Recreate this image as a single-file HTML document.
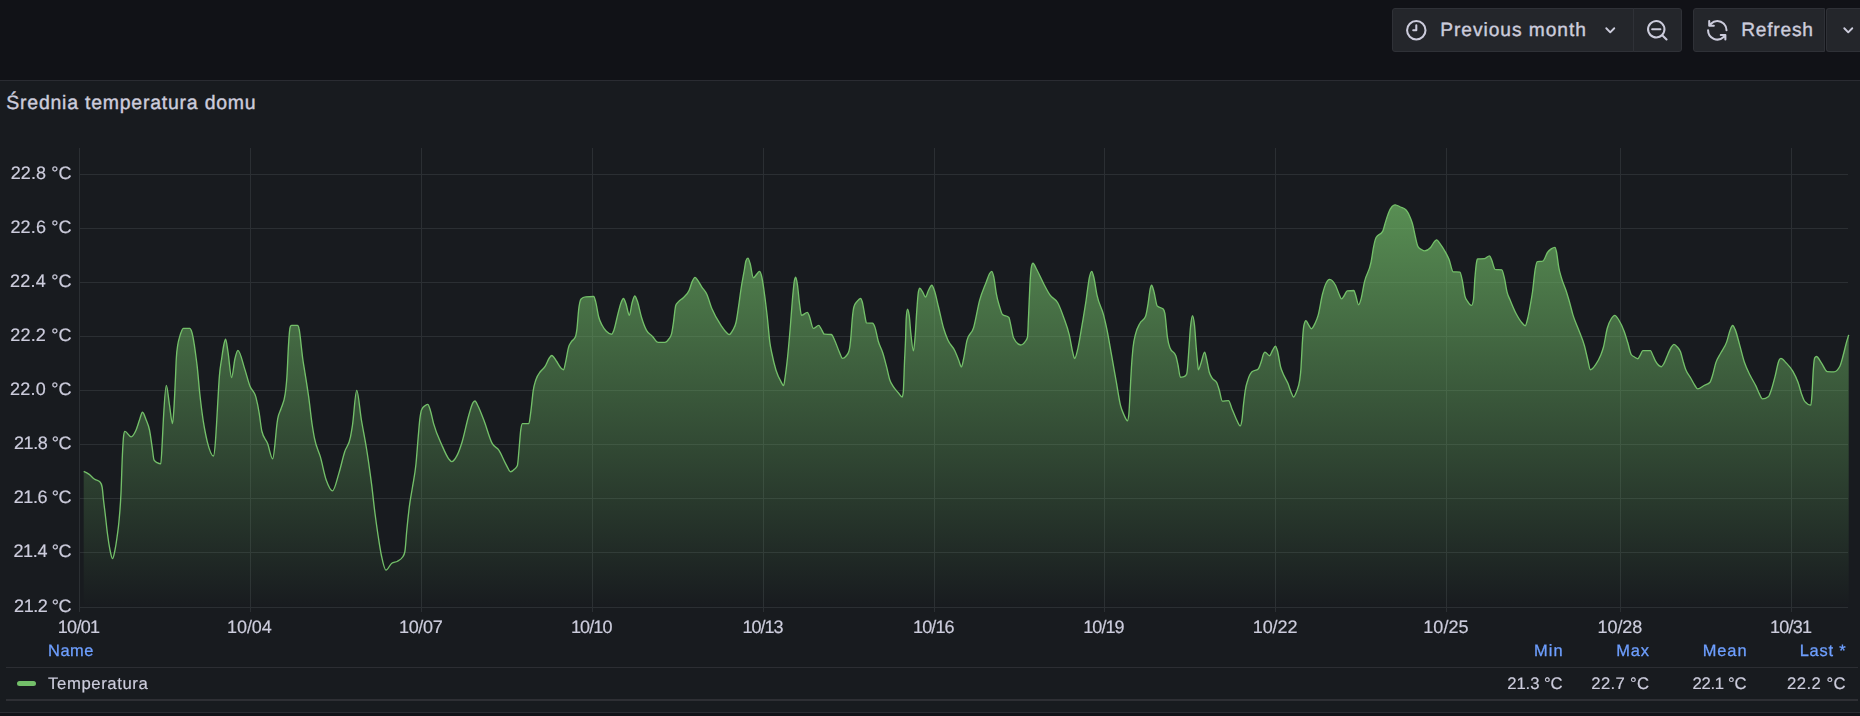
<!DOCTYPE html>
<html lang="en"><head><meta charset="utf-8"><title>Średnia temperatura domu</title>
<style>
html,body{margin:0;padding:0;overflow:hidden;}
body{width:1860px;height:716px;overflow:hidden;background:#111217;position:relative;font-family:"Liberation Sans",sans-serif;}
.t{position:absolute;white-space:nowrap;line-height:1;text-rendering:geometricPrecision;}
.ic{position:absolute;}
.plot{position:absolute;left:0;top:0;}
.btn{position:absolute;box-sizing:border-box;background:#24262b;border:1px solid #2f3137;height:44px;top:8px;}
.panel{position:absolute;left:0;top:80px;width:1860px;height:633px;box-sizing:border-box;background:#181b1f;border:1px solid #2a2c32;border-left:none;border-right:none;}
.hr{position:absolute;left:6px;width:1852px;}
.gl{position:absolute;left:0;top:0;width:1860px;height:716px;will-change:transform;}
</style></head><body>
<div class="btn" style="left:1392px;width:242px;border-radius:3px 0 0 3px;"></div>
<div class="btn" style="left:1633px;width:49px;border-radius:0 3px 3px 0;"></div>
<div class="btn" style="left:1693px;width:132px;border-radius:3px 0 0 3px;"></div>
<div class="btn" style="left:1825.5px;width:34.5px;border-radius:3px 0 0 3px;border-right:none;"></div>
<div class="panel"></div>
<svg class="plot" width="1860" height="716" viewBox="0 0 1860 716">
<defs><linearGradient id="g" gradientUnits="userSpaceOnUse" x1="0" y1="148" x2="0" y2="607">
<stop offset="0" stop-color="#73bf69" stop-opacity="0.8"/><stop offset="1" stop-color="#73bf69" stop-opacity="0"/></linearGradient></defs>
<g fill="rgb(43,47,51)" shape-rendering="crispEdges"><rect x="79" y="148" width="1" height="464"/><rect x="250" y="148" width="1" height="464"/><rect x="421" y="148" width="1" height="464"/><rect x="592" y="148" width="1" height="464"/><rect x="763" y="148" width="1" height="464"/><rect x="934" y="148" width="1" height="464"/><rect x="1104" y="148" width="1" height="464"/><rect x="1275" y="148" width="1" height="464"/><rect x="1446" y="148" width="1" height="464"/><rect x="1620" y="148" width="1" height="464"/><rect x="1791" y="148" width="1" height="464"/><rect x="79" y="174" width="1769" height="1"/><rect x="79" y="228" width="1769" height="1"/><rect x="79" y="282" width="1769" height="1"/><rect x="79" y="336" width="1769" height="1"/><rect x="79" y="390" width="1769" height="1"/><rect x="79" y="444" width="1769" height="1"/><rect x="79" y="498" width="1769" height="1"/><rect x="79" y="552" width="1769" height="1"/><rect x="79" y="607" width="1769" height="1"/></g>
<path d="M83.7,471.4C85.5,472.2 87.4,473.1 89.2,474.4C90.9,475.6 92.6,477.8 94.3,479.0C96.2,480.4 98.2,480.0 100.1,482.0C100.8,482.7 101.4,483.7 102.1,487.0C102.6,489.3 103.0,495.9 103.5,500.0C104.1,505.0 104.6,509.2 105.2,514.0C106.0,520.5 106.7,528.2 107.5,534.0C108.3,540.3 109.2,545.9 110.0,550.0C110.8,554.1 111.7,558.6 112.5,558.6C113.3,558.6 114.0,554.6 114.8,551.0C115.5,547.5 116.3,542.8 117.0,537.5C117.6,532.9 118.3,528.9 118.9,522.0C119.6,514.4 120.3,508.3 121.0,493.0C121.5,482.8 121.9,464.8 122.4,455.0C122.8,446.6 123.2,438.8 123.6,436.0C124.0,432.9 124.5,431.4 124.9,431.4C127.0,431.4 129.0,436.8 131.1,436.8C132.8,436.8 134.4,433.8 136.1,430.0C137.2,427.4 138.4,423.1 139.5,420.0C140.5,417.2 141.5,412.2 142.5,412.2C143.7,412.2 145.0,416.8 146.2,420.0C147.3,422.9 148.4,424.6 149.5,430.0C150.4,434.3 151.2,441.1 152.1,446.8C152.8,451.2 153.4,459.1 154.1,460.2C155.1,461.9 156.1,462.1 157.1,462.7C158.3,463.4 159.6,463.9 160.8,463.9C161.2,463.9 161.7,452.6 162.1,445.1C162.5,437.6 163.0,426.6 163.4,419.0C164.4,402.1 165.3,385.4 166.3,385.4C167.4,385.4 168.4,398.4 169.5,405.0C170.5,411.2 171.5,423.6 172.5,423.6C172.9,423.6 173.4,416.7 173.8,410.5C174.4,402.4 174.9,389.5 175.5,377.0C175.8,371.1 176.0,363.4 176.3,358.5C176.8,349.4 177.3,348.2 177.8,344.7C178.4,340.3 179.1,338.9 179.7,336.6C180.2,334.8 180.7,333.2 181.2,332.0C181.9,330.2 182.7,328.4 183.4,328.4C185.5,328.4 187.7,328.4 189.8,328.4C190.3,328.4 190.8,329.2 191.3,330.5C191.8,331.9 192.4,334.0 192.9,336.6C193.4,338.9 193.8,341.7 194.3,344.7C194.7,347.5 195.2,350.8 195.6,354.0C196.1,358.0 196.7,361.9 197.2,366.6C198.1,374.3 198.9,385.7 199.8,393.8C200.9,404.1 202.0,412.8 203.1,420.0C203.7,423.7 204.2,426.9 204.8,430.0C205.6,434.5 206.5,438.4 207.3,441.8C209.4,450.1 211.4,456.0 213.5,456.0C214.1,456.0 214.8,449.7 215.4,441.8C215.8,437.2 216.1,430.9 216.5,425.0C217.2,413.7 217.9,399.0 218.6,388.0C218.9,383.8 219.1,379.5 219.4,376.0C220.2,366.0 220.9,363.9 221.7,358.5C222.4,353.6 223.1,348.3 223.8,345.0C224.4,342.2 225.0,339.2 225.6,339.2C226.4,339.2 227.2,347.2 228.0,352.0C229.2,359.2 230.4,377.5 231.6,377.5C232.7,377.5 233.9,363.1 235.0,358.5C236.0,354.5 236.9,350.3 237.9,350.3C240.1,350.3 242.4,361.8 244.6,368.6C246.4,374.0 248.2,381.5 250.0,386.2C252.0,391.3 253.9,389.8 255.9,397.1C257.0,401.3 258.2,407.1 259.3,413.9C260.1,418.9 261.0,427.4 261.8,431.0C263.7,439.3 265.7,438.4 267.6,443.5C269.3,447.9 271.0,458.9 272.7,458.9C273.5,458.9 274.4,449.6 275.2,441.8C275.6,437.8 276.1,431.9 276.5,428.0C276.9,424.4 277.3,421.3 277.7,418.9C278.8,412.2 279.9,412.4 281.0,408.8C282.4,404.2 283.8,403.8 285.2,393.8C285.8,389.8 286.3,385.4 286.9,377.0C287.5,368.6 288.0,351.9 288.6,343.5C289.1,335.6 289.7,328.3 290.2,327.0C290.6,325.9 291.1,325.4 291.5,325.4C293.5,325.4 295.5,325.4 297.5,325.4C298.0,325.4 298.6,326.6 299.1,329.0C299.5,330.6 299.8,333.7 300.2,336.6C300.6,339.5 300.9,343.3 301.3,346.5C301.8,350.6 302.2,354.9 302.7,358.5C303.3,363.3 304.0,366.5 304.6,370.5C306.0,379.2 307.3,387.1 308.7,397.1C309.9,405.6 311.0,417.2 312.2,425.0C313.0,430.1 313.7,434.5 314.5,438.4C316.5,448.4 318.4,449.9 320.4,456.9C322.4,463.9 324.3,474.7 326.3,480.3C328.4,486.2 330.4,490.9 332.5,490.9C334.6,490.9 336.7,480.4 338.8,473.6C340.8,467.2 342.7,458.0 344.7,451.8C346.6,445.7 348.6,446.6 350.5,436.8C351.2,433.4 351.8,429.4 352.5,425.0C353.9,415.7 355.3,390.4 356.7,390.4C358.3,390.4 359.8,410.7 361.4,420.0C363.1,430.1 364.8,437.8 366.5,448.5C368.2,459.0 369.8,470.5 371.5,483.7C372.7,492.9 373.8,504.4 375.0,513.5C376.0,521.3 377.0,528.4 378.0,535.0C379.2,542.7 380.3,550.4 381.5,556.0C383.0,563.0 384.4,570.1 385.9,570.1C387.9,570.1 389.8,564.6 391.8,563.2C393.7,561.9 395.7,562.4 397.6,561.2C399.3,560.2 400.9,559.8 402.6,557.0C403.3,555.8 404.1,555.3 404.8,552.0C405.5,549.0 406.1,537.1 406.8,530.3C407.6,521.8 408.5,513.5 409.3,506.8C410.4,498.3 411.4,493.8 412.5,487.0C413.7,479.5 414.8,475.5 416.0,463.8C416.7,456.4 417.5,445.4 418.2,437.0C418.8,430.5 419.3,423.1 419.9,418.6C420.5,414.0 421.0,411.0 421.6,409.7C422.8,406.9 424.1,406.4 425.3,405.5C426.1,404.9 427.0,404.3 427.8,404.3C428.6,404.3 429.5,407.6 430.3,410.2C431.4,413.6 432.5,419.6 433.6,423.6C436.4,433.8 439.2,439.1 442.0,445.4C444.2,450.5 446.5,456.0 448.7,458.8C449.7,460.1 450.7,461.6 451.7,461.6C453.5,461.6 455.3,458.9 457.1,455.4C458.8,452.2 460.4,447.4 462.1,442.0C464.3,434.8 466.6,422.7 468.8,415.2C470.2,410.5 471.6,404.9 473.0,402.7C473.7,401.7 474.3,401.0 475.0,401.0C476.0,401.0 477.0,404.1 478.0,406.0C480.0,409.8 481.9,415.2 483.9,420.3C486.7,427.5 489.5,438.7 492.3,443.7C494.5,447.7 496.8,447.0 499.0,450.4C501.2,453.8 503.5,459.9 505.7,463.8C507.4,466.7 509.0,471.7 510.7,471.7C512.1,471.7 513.5,470.3 514.9,468.8C515.7,467.9 516.6,467.7 517.4,465.5C518.0,464.0 518.5,454.8 519.1,448.7C519.6,443.0 520.2,434.5 520.7,430.3C521.3,425.9 521.8,423.6 522.4,423.6C524.5,423.6 526.7,423.6 528.8,423.6C529.5,423.6 530.1,416.7 530.8,411.9C531.6,406.0 532.5,395.4 533.3,390.1C534.1,384.8 535.0,382.7 535.8,380.0C537.4,374.9 538.9,373.8 540.5,371.5C542.0,369.3 543.6,368.8 545.1,366.4C546.5,364.2 547.9,359.9 549.3,358.0C550.1,356.9 551.0,355.5 551.8,355.5C553.2,355.5 554.6,358.6 556.0,360.5C557.7,362.7 559.3,366.4 561.0,368.0C561.9,368.8 562.7,369.7 563.6,369.7C564.3,369.7 564.9,365.0 565.6,362.2C566.6,357.9 567.6,350.5 568.6,347.1C569.4,344.3 570.3,343.5 571.1,342.1C572.5,339.7 573.9,340.4 575.3,337.1C575.9,335.8 576.4,333.4 577.0,328.7C577.5,324.3 578.1,315.0 578.6,310.3C579.4,303.0 580.3,299.7 581.1,298.9C582.5,297.6 583.9,297.0 585.3,296.9C588.1,296.6 590.9,296.5 593.7,296.5C594.4,296.5 595.0,299.5 595.7,301.9C596.7,305.5 597.7,313.2 598.7,317.0C599.8,321.3 601.0,323.1 602.1,325.3C603.5,328.1 604.9,329.8 606.3,331.2C608.1,333.1 610.0,334.2 611.8,334.2C612.5,334.2 613.1,332.1 613.8,330.4C615.2,326.8 616.6,318.8 618.0,313.6C619.1,309.5 620.2,304.5 621.3,301.9C622.0,300.2 622.8,298.5 623.5,298.5C624.3,298.5 625.1,301.5 625.9,303.6C627.1,306.7 628.2,315.3 629.4,315.3C630.2,315.3 631.1,306.7 631.9,303.6C632.8,300.1 633.8,296.0 634.7,296.0C635.6,296.0 636.4,298.7 637.3,301.0C638.7,304.7 640.0,312.4 641.4,317.0C643.1,322.7 644.8,327.2 646.5,330.4C648.4,334.0 650.4,334.2 652.3,336.2C654.3,338.2 656.2,342.4 658.2,342.4C660.4,342.4 662.7,342.4 664.9,342.4C666.3,342.4 667.7,340.9 669.1,338.7C669.9,337.4 670.8,337.0 671.6,333.7C672.2,331.4 672.7,327.4 673.3,323.7C674.1,318.3 675.0,307.4 675.8,305.2C676.6,303.0 677.5,302.9 678.3,301.9C680.0,300.0 681.6,299.4 683.3,297.7C685.3,295.7 687.2,294.7 689.2,290.2C690.3,287.7 691.4,283.1 692.5,280.9C693.3,279.2 694.2,277.3 695.0,277.3C695.9,277.3 696.7,279.0 697.6,280.1C699.0,281.9 700.3,284.7 701.7,286.8C703.4,289.5 705.1,290.6 706.8,294.3C708.5,297.9 710.1,304.4 711.8,308.6C714.9,316.2 717.9,320.7 721.0,325.3C723.0,328.2 724.9,331.3 726.9,332.9C727.7,333.6 728.6,334.5 729.4,334.5C730.5,334.5 731.6,332.4 732.7,330.4C733.8,328.3 735.0,327.3 736.1,322.0C736.9,318.3 737.7,312.3 738.5,307.0C739.4,301.2 740.2,294.1 741.1,288.5C742.2,281.1 743.4,275.5 744.5,269.0C745.0,266.3 745.4,262.4 745.9,261.0C746.6,259.1 747.2,258.1 747.9,258.1C748.6,258.1 749.4,261.1 750.1,263.5C751.2,267.0 752.2,277.7 753.3,277.7C755.4,277.7 757.6,271.3 759.7,271.3C760.4,271.3 761.2,274.2 761.9,277.5C762.7,281.2 763.6,287.5 764.4,293.5C765.4,300.4 766.3,308.2 767.3,317.0C768.1,324.6 769.0,335.7 769.8,342.0C770.5,347.6 771.3,350.4 772.0,354.0C773.3,360.6 774.7,365.8 776.0,370.2C777.7,375.8 779.4,378.9 781.1,381.9C781.9,383.4 782.8,385.6 783.6,385.6C784.2,385.6 784.7,379.8 785.3,376.0C786.1,370.8 786.8,364.3 787.6,357.0C788.5,348.4 789.4,337.7 790.3,327.0C791.1,317.1 792.0,304.0 792.8,295.3C793.4,289.4 793.9,283.0 794.5,280.2C794.9,278.2 795.3,277.2 795.7,277.2C796.2,277.2 796.8,280.8 797.3,284.0C798.1,288.7 798.8,298.5 799.6,304.0C800.2,308.6 800.9,315.4 801.5,315.4C803.5,315.4 805.4,312.4 807.4,312.4C808.0,312.4 808.7,314.6 809.3,316.0C810.6,319.0 812.0,328.4 813.3,328.4C815.1,328.4 816.9,325.4 818.7,325.4C819.5,325.4 820.2,327.4 821.0,328.5C822.1,330.2 823.3,334.1 824.4,334.2C826.7,334.4 829.0,334.3 831.3,334.5C832.4,334.6 833.4,337.8 834.5,340.0C836.1,343.2 837.7,348.5 839.3,352.0C840.4,354.3 841.4,358.3 842.5,358.3C843.7,358.3 844.8,357.6 846.0,356.2C847.0,355.0 848.0,354.5 849.0,351.0C849.5,349.2 850.1,345.4 850.6,340.3C851.2,334.9 851.7,324.3 852.3,318.7C852.8,313.4 853.4,308.9 853.9,307.0C855.0,303.1 856.2,302.6 857.3,301.1C858.4,299.7 859.5,298.3 860.6,298.3C861.2,298.3 861.7,300.0 862.3,302.0C863.1,304.9 864.0,311.4 864.8,315.4C865.4,318.1 865.9,322.8 866.5,322.9C868.5,323.1 870.4,323.0 872.4,323.2C873.2,323.3 874.1,324.8 874.9,327.1C876.0,330.1 877.1,337.1 878.2,341.0C879.7,346.4 881.3,348.1 882.8,353.0C884.1,357.0 885.3,362.0 886.6,366.9C887.7,371.2 888.8,377.1 889.9,380.3C890.8,382.8 891.6,383.8 892.5,385.3C894.4,388.6 896.4,390.5 898.3,392.8C899.6,394.3 900.9,397.0 902.2,397.0C902.6,397.0 902.9,395.3 903.3,392.0C903.7,388.4 904.1,371.3 904.5,362.0C904.9,353.4 905.2,348.5 905.6,338.0C905.8,332.3 906.0,321.6 906.2,318.7C906.6,312.4 907.1,309.2 907.5,309.2C908.1,309.2 908.6,311.3 909.2,315.4C909.8,319.5 910.3,328.6 910.9,333.8C911.7,341.5 912.6,350.8 913.4,350.8C914.0,350.8 914.5,343.7 915.1,337.0C915.7,330.3 916.2,318.1 916.8,310.4C917.3,303.2 917.9,294.7 918.4,291.9C918.9,289.4 919.3,288.2 919.8,288.2C920.7,288.2 921.7,290.5 922.6,291.9C923.6,293.4 924.5,297.0 925.5,297.0C926.5,297.0 927.5,292.2 928.5,290.3C929.6,288.2 930.7,285.2 931.8,285.2C932.6,285.2 933.5,288.0 934.3,290.3C935.7,294.2 937.1,301.3 938.5,307.0C940.2,313.8 941.8,322.3 943.5,328.0C945.0,333.1 946.5,336.9 948.0,340.3C950.3,345.4 952.5,345.9 954.8,350.7C956.1,353.4 957.3,356.9 958.6,360.0C959.6,362.3 960.5,366.9 961.5,366.9C962.2,366.9 962.9,362.1 963.6,359.0C964.7,354.0 965.9,344.6 967.0,340.3C969.2,332.1 971.3,335.1 973.5,328.0C975.5,321.4 977.6,307.8 979.6,300.3C981.8,292.1 984.1,287.7 986.3,281.9C987.4,279.0 988.5,275.3 989.6,273.5C990.3,272.3 991.1,271.3 991.8,271.3C992.5,271.3 993.1,273.9 993.8,276.9C994.6,280.7 995.5,289.0 996.3,293.6C997.4,299.9 998.6,303.3 999.7,307.0C1000.6,310.0 1001.6,313.7 1002.5,314.5C1004.6,316.4 1006.8,315.5 1008.9,317.4C1009.4,317.9 1010.0,321.5 1010.5,323.8C1011.5,328.0 1012.5,335.6 1013.5,337.7C1015.9,342.6 1018.2,345.0 1020.6,345.0C1022.3,345.0 1023.9,343.7 1025.6,341.0C1026.2,340.0 1026.9,339.7 1027.5,337.0C1027.9,335.5 1028.2,322.6 1028.6,315.0C1029.1,303.9 1029.7,288.4 1030.2,280.0C1030.6,273.7 1031.0,268.6 1031.4,266.8C1031.9,264.4 1032.5,263.2 1033.0,263.2C1034.1,263.2 1035.1,266.6 1036.2,268.5C1038.7,273.0 1041.3,279.2 1043.8,284.0C1045.9,288.0 1048.0,292.2 1050.1,295.2C1052.6,298.8 1055.2,298.2 1057.7,302.8C1059.6,306.3 1061.6,311.6 1063.5,317.0C1065.5,322.5 1067.4,326.8 1069.4,335.4C1070.5,340.2 1071.6,347.8 1072.7,352.2C1073.3,354.7 1074.0,358.5 1074.6,358.5C1075.7,358.5 1076.7,353.2 1077.8,348.8C1079.2,343.0 1080.6,333.6 1082.0,325.4C1083.4,317.4 1084.7,309.3 1086.1,300.3C1087.2,292.9 1088.4,281.6 1089.5,276.8C1090.2,273.7 1091.0,271.3 1091.7,271.3C1092.4,271.3 1093.0,274.3 1093.7,276.8C1094.8,281.0 1095.9,290.0 1097.0,295.2C1099.2,305.8 1101.5,306.5 1103.7,315.3C1104.8,319.8 1106.0,324.8 1107.1,330.4C1108.5,337.3 1109.9,345.8 1111.3,353.6C1113.0,362.9 1114.6,372.5 1116.3,381.9C1117.7,389.8 1119.1,399.7 1120.5,405.3C1121.6,409.7 1122.7,412.0 1123.8,414.5C1125.0,417.3 1126.3,420.7 1127.5,420.7C1128.0,420.7 1128.4,418.4 1128.9,413.7C1129.3,409.4 1129.8,398.2 1130.2,390.3C1130.6,383.0 1131.0,374.4 1131.4,368.0C1131.9,359.5 1132.5,353.1 1133.0,347.8C1133.9,339.2 1134.7,337.5 1135.6,333.8C1137.0,328.0 1138.3,326.4 1139.7,323.7C1141.7,319.8 1143.6,321.2 1145.6,316.2C1146.4,314.1 1147.3,308.6 1148.1,303.6C1148.8,299.2 1149.6,291.5 1150.3,288.5C1150.7,286.7 1151.2,285.2 1151.6,285.2C1152.4,285.2 1153.2,289.2 1154.0,291.9C1155.1,295.7 1156.2,305.0 1157.3,306.1C1159.3,308.0 1161.2,307.1 1163.2,309.0C1163.8,309.6 1164.3,310.6 1164.9,313.7C1165.7,318.2 1166.6,331.4 1167.4,337.1C1168.2,342.8 1169.1,345.6 1169.9,347.8C1171.9,353.1 1173.8,350.4 1175.8,355.7C1176.5,357.7 1177.3,361.6 1178.0,365.0C1178.8,368.7 1179.6,377.2 1180.4,377.2C1181.4,377.2 1182.3,377.1 1183.3,376.9C1184.4,376.7 1185.5,376.0 1186.6,374.3C1186.9,373.8 1187.3,370.4 1187.6,367.0C1188.0,362.9 1188.4,356.0 1188.8,350.5C1189.4,342.7 1189.9,332.8 1190.5,327.1C1191.2,320.4 1191.8,315.7 1192.5,315.7C1193.2,315.7 1193.8,319.3 1194.5,325.4C1195.1,330.6 1195.6,340.4 1196.2,347.2C1196.6,352.4 1197.1,357.8 1197.5,362.0C1197.8,364.9 1198.1,369.8 1198.4,369.8C1199.2,369.8 1200.1,365.8 1200.9,363.5C1202.1,360.1 1203.4,352.1 1204.6,352.1C1205.3,352.1 1206.0,356.6 1206.7,359.5C1207.5,363.0 1208.4,369.0 1209.2,372.0C1210.1,375.1 1210.9,376.2 1211.8,377.7C1213.5,380.7 1215.1,379.4 1216.8,382.7C1217.6,384.4 1218.5,387.6 1219.3,390.3C1220.3,393.6 1221.3,401.1 1222.3,401.1C1224.4,401.1 1226.4,400.6 1228.5,400.6C1229.6,400.6 1230.8,406.0 1231.9,408.7C1233.3,412.0 1234.7,415.8 1236.1,418.7C1237.5,421.5 1238.8,425.9 1240.2,425.9C1240.8,425.9 1241.3,424.1 1241.9,420.4C1242.5,416.7 1243.0,408.7 1243.6,403.7C1244.2,398.7 1244.7,393.9 1245.3,390.3C1246.1,385.0 1247.0,382.9 1247.8,380.2C1249.2,375.6 1250.6,373.1 1252.0,371.8C1254.1,369.9 1256.1,370.9 1258.2,369.0C1259.2,368.1 1260.2,364.8 1261.2,361.8C1262.0,359.5 1262.7,355.6 1263.5,354.0C1264.0,353.0 1264.4,352.1 1264.9,352.1C1266.5,352.1 1268.0,355.7 1269.6,355.7C1270.7,355.7 1271.8,351.4 1272.9,349.7C1273.7,348.4 1274.6,346.2 1275.4,346.2C1276.1,346.2 1276.8,348.6 1277.5,351.0C1278.5,354.6 1279.6,363.1 1280.6,367.0C1281.4,370.0 1282.2,371.5 1283.0,373.5C1284.7,377.6 1286.3,379.5 1288.0,383.6C1289.1,386.3 1290.2,390.3 1291.3,392.8C1292.0,394.5 1292.8,397.0 1293.5,397.0C1294.5,397.0 1295.4,394.4 1296.4,391.9C1297.5,389.0 1298.6,388.0 1299.7,380.2C1300.1,377.1 1300.6,374.1 1301.0,368.0C1301.4,361.9 1301.9,350.5 1302.3,343.8C1302.8,335.6 1303.4,327.9 1303.9,325.4C1304.6,322.3 1305.2,320.7 1305.9,320.7C1306.9,320.7 1307.9,324.0 1308.9,325.4C1309.7,326.6 1310.6,328.7 1311.4,328.7C1312.5,328.7 1313.7,326.1 1314.8,323.9C1315.9,321.6 1317.1,319.3 1318.2,315.2C1319.6,310.1 1321.0,300.0 1322.4,294.5C1323.7,289.5 1324.9,285.5 1326.2,283.0C1327.3,280.7 1328.5,279.3 1329.6,279.3C1331.6,279.3 1333.6,281.6 1335.6,285.5C1336.8,287.9 1338.1,292.1 1339.3,294.7C1340.0,296.3 1340.8,298.9 1341.5,298.9C1342.4,298.9 1343.4,296.8 1344.3,295.5C1345.3,294.1 1346.2,290.9 1347.2,290.8C1349.4,290.6 1351.7,290.5 1353.9,290.5C1354.4,290.5 1355.0,293.2 1355.5,294.7C1356.5,297.6 1357.6,304.7 1358.6,304.7C1359.4,304.7 1360.3,301.8 1361.1,298.9C1362.2,295.0 1363.3,286.9 1364.4,282.1C1366.6,272.3 1368.9,273.6 1371.1,262.0C1371.9,257.7 1372.8,251.0 1373.6,246.9C1374.4,242.8 1375.3,239.1 1376.1,237.5C1378.3,233.2 1380.6,235.4 1382.8,231.1C1383.7,229.4 1384.5,225.2 1385.4,222.4C1386.5,218.9 1387.6,215.0 1388.7,212.4C1389.8,209.7 1391.0,207.8 1392.1,206.5C1393.1,205.4 1394.1,204.8 1395.1,204.8C1396.9,204.8 1398.6,206.1 1400.4,207.0C1402.4,208.0 1404.3,208.1 1406.3,210.3C1407.7,211.9 1409.1,214.5 1410.5,218.2C1411.3,220.4 1412.2,222.6 1413.0,225.8C1413.8,229.0 1414.7,234.0 1415.5,237.5C1416.3,241.0 1417.2,245.3 1418.0,246.7C1419.1,248.6 1420.3,248.8 1421.4,249.5C1422.5,250.2 1423.6,250.9 1424.7,250.9C1426.7,250.9 1428.6,249.7 1430.6,247.5C1432.0,245.9 1433.4,242.5 1434.8,241.2C1435.5,240.6 1436.1,239.8 1436.8,239.8C1437.8,239.8 1438.8,242.0 1439.8,243.3C1441.8,245.9 1443.7,248.9 1445.7,252.6C1446.8,254.7 1447.9,256.6 1449.0,259.3C1450.4,262.7 1451.8,271.7 1453.2,271.8C1455.4,272.0 1457.7,271.9 1459.9,272.1C1460.7,272.2 1461.6,277.0 1462.4,281.0C1463.2,285.0 1464.1,292.8 1464.9,296.1C1465.7,299.4 1466.6,299.7 1467.4,301.1C1468.8,303.4 1470.2,305.3 1471.6,305.3C1472.2,305.3 1472.9,303.4 1473.5,299.5C1473.9,296.9 1474.4,285.1 1474.8,279.4C1475.4,272.0 1475.9,266.0 1476.5,262.6C1476.8,260.6 1477.2,258.9 1477.5,258.9C1479.7,258.8 1482.0,258.8 1484.2,258.7C1486.0,258.6 1487.7,255.9 1489.5,255.9C1490.2,255.9 1491.0,258.5 1491.7,260.1C1492.8,262.6 1494.0,269.1 1495.1,269.3C1497.3,269.6 1499.6,269.5 1501.8,269.8C1502.6,269.9 1503.5,274.3 1504.3,277.7C1505.3,281.6 1506.2,288.9 1507.2,292.6C1508.2,296.3 1509.1,297.6 1510.1,300.0C1512.1,304.8 1514.0,309.7 1516.0,313.5C1518.0,317.3 1519.9,320.5 1521.9,322.7C1523.0,324.0 1524.1,325.7 1525.2,325.7C1526.0,325.7 1526.9,321.8 1527.7,318.5C1528.6,314.8 1529.6,309.3 1530.5,304.0C1531.2,300.2 1531.8,296.6 1532.5,292.0C1533.4,285.5 1534.4,273.8 1535.3,268.7C1536.0,265.0 1536.6,261.8 1537.3,261.7C1539.1,261.4 1541.0,261.5 1542.8,261.2C1544.5,260.9 1546.1,254.1 1547.8,252.0C1548.9,250.5 1550.1,249.7 1551.2,248.9C1552.4,248.1 1553.7,247.3 1554.9,247.3C1555.4,247.3 1556.0,249.6 1556.5,252.0C1557.2,255.4 1558.0,263.0 1558.7,267.0C1559.5,271.6 1560.4,274.1 1561.2,277.1C1562.8,282.9 1564.4,285.6 1566.0,290.5C1567.1,293.8 1568.1,297.3 1569.2,301.0C1570.5,305.4 1571.7,311.0 1573.0,315.1C1574.9,321.4 1576.9,325.0 1578.8,330.2C1580.7,335.3 1582.6,339.0 1584.5,346.0C1585.6,350.1 1586.7,355.6 1587.8,360.0C1588.7,363.4 1589.5,369.7 1590.4,369.7C1592.1,369.7 1593.8,367.2 1595.5,364.8C1597.3,362.3 1599.0,359.6 1600.8,355.0C1601.7,352.7 1602.6,350.4 1603.5,347.0C1604.7,342.3 1606.0,333.2 1607.2,328.5C1608.6,323.2 1610.0,320.7 1611.4,318.5C1612.5,316.8 1613.6,315.3 1614.7,315.3C1616.1,315.3 1617.4,317.8 1618.8,320.0C1620.5,322.7 1622.3,326.3 1624.0,331.0C1625.3,334.4 1626.5,338.6 1627.8,342.8C1628.9,346.5 1630.1,352.8 1631.2,354.5C1632.3,356.2 1633.4,356.3 1634.5,357.0C1635.6,357.7 1636.8,358.7 1637.9,358.7C1638.6,358.7 1639.4,356.5 1640.1,355.3C1641.0,353.8 1642.0,350.6 1642.9,350.6C1645.4,350.6 1648.0,350.6 1650.5,350.6C1651.2,350.6 1651.8,353.1 1652.5,354.5C1653.5,356.6 1654.5,359.4 1655.5,361.2C1657.5,364.7 1659.4,366.7 1661.4,366.7C1662.2,366.7 1663.1,365.1 1663.9,363.7C1665.3,361.4 1666.7,356.8 1668.1,353.7C1669.2,351.3 1670.3,348.6 1671.4,347.0C1672.2,345.8 1673.1,344.3 1673.9,344.3C1675.0,344.3 1676.2,345.7 1677.3,347.0C1678.4,348.3 1679.5,349.0 1680.6,352.0C1681.4,354.3 1682.3,358.3 1683.1,361.2C1684.0,364.2 1684.8,367.3 1685.7,369.6C1687.4,374.1 1689.0,375.1 1690.7,378.0C1692.1,380.4 1693.5,383.5 1694.9,385.5C1695.8,386.8 1696.8,388.9 1697.7,388.9C1699.8,388.9 1702.0,386.7 1704.1,385.5C1706.1,384.4 1708.0,384.4 1710.0,382.2C1710.8,381.3 1711.7,378.1 1712.5,375.5C1713.6,372.0 1714.7,366.3 1715.8,362.9C1717.5,357.6 1719.2,356.1 1720.9,352.8C1722.8,349.1 1724.8,347.4 1726.7,341.9C1727.8,338.7 1729.0,333.1 1730.1,330.2C1730.9,328.1 1731.8,325.5 1732.6,325.5C1733.4,325.5 1734.3,327.5 1735.1,329.4C1736.5,332.5 1737.9,338.7 1739.3,343.6C1741.0,349.5 1742.6,356.9 1744.3,362.0C1746.3,368.0 1748.2,371.4 1750.2,375.5C1752.2,379.6 1754.1,382.2 1756.1,386.4C1757.2,388.7 1758.3,391.7 1759.4,393.9C1760.4,395.9 1761.4,398.9 1762.4,398.9C1764.5,398.9 1766.5,398.1 1768.6,396.4C1769.4,395.7 1770.3,392.8 1771.1,390.5C1772.5,386.6 1773.9,381.0 1775.3,375.5C1776.4,371.1 1777.6,363.9 1778.7,361.2C1779.4,359.4 1780.2,358.4 1780.9,358.4C1782.7,358.4 1784.4,361.1 1786.2,362.9C1788.4,365.2 1790.7,367.4 1792.9,371.3C1794.6,374.3 1796.3,377.5 1798.0,382.2C1799.4,386.0 1800.7,392.0 1802.1,395.6C1803.0,397.9 1803.8,400.4 1804.7,401.4C1806.8,403.9 1808.8,405.1 1810.9,405.1C1811.2,405.1 1811.6,399.9 1811.9,395.6C1812.4,389.2 1812.9,375.2 1813.4,368.8C1813.8,363.3 1814.3,358.6 1814.7,357.9C1815.3,357.0 1815.8,356.5 1816.4,356.5C1818.1,356.5 1819.7,360.6 1821.4,362.9C1823.4,365.6 1825.3,371.5 1827.3,371.6C1829.5,371.7 1831.8,371.8 1834.0,371.8C1836.0,371.8 1837.9,369.9 1839.9,366.2C1841.0,364.1 1842.1,359.3 1843.2,355.3C1844.3,351.2 1845.5,345.9 1846.6,341.9C1847.3,339.4 1848.0,337.2 1848.7,334.9L1848.7,607L83.7,607Z" fill="url(#g)"/>
<path d="M83.7,471.4C85.5,472.2 87.4,473.1 89.2,474.4C90.9,475.6 92.6,477.8 94.3,479.0C96.2,480.4 98.2,480.0 100.1,482.0C100.8,482.7 101.4,483.7 102.1,487.0C102.6,489.3 103.0,495.9 103.5,500.0C104.1,505.0 104.6,509.2 105.2,514.0C106.0,520.5 106.7,528.2 107.5,534.0C108.3,540.3 109.2,545.9 110.0,550.0C110.8,554.1 111.7,558.6 112.5,558.6C113.3,558.6 114.0,554.6 114.8,551.0C115.5,547.5 116.3,542.8 117.0,537.5C117.6,532.9 118.3,528.9 118.9,522.0C119.6,514.4 120.3,508.3 121.0,493.0C121.5,482.8 121.9,464.8 122.4,455.0C122.8,446.6 123.2,438.8 123.6,436.0C124.0,432.9 124.5,431.4 124.9,431.4C127.0,431.4 129.0,436.8 131.1,436.8C132.8,436.8 134.4,433.8 136.1,430.0C137.2,427.4 138.4,423.1 139.5,420.0C140.5,417.2 141.5,412.2 142.5,412.2C143.7,412.2 145.0,416.8 146.2,420.0C147.3,422.9 148.4,424.6 149.5,430.0C150.4,434.3 151.2,441.1 152.1,446.8C152.8,451.2 153.4,459.1 154.1,460.2C155.1,461.9 156.1,462.1 157.1,462.7C158.3,463.4 159.6,463.9 160.8,463.9C161.2,463.9 161.7,452.6 162.1,445.1C162.5,437.6 163.0,426.6 163.4,419.0C164.4,402.1 165.3,385.4 166.3,385.4C167.4,385.4 168.4,398.4 169.5,405.0C170.5,411.2 171.5,423.6 172.5,423.6C172.9,423.6 173.4,416.7 173.8,410.5C174.4,402.4 174.9,389.5 175.5,377.0C175.8,371.1 176.0,363.4 176.3,358.5C176.8,349.4 177.3,348.2 177.8,344.7C178.4,340.3 179.1,338.9 179.7,336.6C180.2,334.8 180.7,333.2 181.2,332.0C181.9,330.2 182.7,328.4 183.4,328.4C185.5,328.4 187.7,328.4 189.8,328.4C190.3,328.4 190.8,329.2 191.3,330.5C191.8,331.9 192.4,334.0 192.9,336.6C193.4,338.9 193.8,341.7 194.3,344.7C194.7,347.5 195.2,350.8 195.6,354.0C196.1,358.0 196.7,361.9 197.2,366.6C198.1,374.3 198.9,385.7 199.8,393.8C200.9,404.1 202.0,412.8 203.1,420.0C203.7,423.7 204.2,426.9 204.8,430.0C205.6,434.5 206.5,438.4 207.3,441.8C209.4,450.1 211.4,456.0 213.5,456.0C214.1,456.0 214.8,449.7 215.4,441.8C215.8,437.2 216.1,430.9 216.5,425.0C217.2,413.7 217.9,399.0 218.6,388.0C218.9,383.8 219.1,379.5 219.4,376.0C220.2,366.0 220.9,363.9 221.7,358.5C222.4,353.6 223.1,348.3 223.8,345.0C224.4,342.2 225.0,339.2 225.6,339.2C226.4,339.2 227.2,347.2 228.0,352.0C229.2,359.2 230.4,377.5 231.6,377.5C232.7,377.5 233.9,363.1 235.0,358.5C236.0,354.5 236.9,350.3 237.9,350.3C240.1,350.3 242.4,361.8 244.6,368.6C246.4,374.0 248.2,381.5 250.0,386.2C252.0,391.3 253.9,389.8 255.9,397.1C257.0,401.3 258.2,407.1 259.3,413.9C260.1,418.9 261.0,427.4 261.8,431.0C263.7,439.3 265.7,438.4 267.6,443.5C269.3,447.9 271.0,458.9 272.7,458.9C273.5,458.9 274.4,449.6 275.2,441.8C275.6,437.8 276.1,431.9 276.5,428.0C276.9,424.4 277.3,421.3 277.7,418.9C278.8,412.2 279.9,412.4 281.0,408.8C282.4,404.2 283.8,403.8 285.2,393.8C285.8,389.8 286.3,385.4 286.9,377.0C287.5,368.6 288.0,351.9 288.6,343.5C289.1,335.6 289.7,328.3 290.2,327.0C290.6,325.9 291.1,325.4 291.5,325.4C293.5,325.4 295.5,325.4 297.5,325.4C298.0,325.4 298.6,326.6 299.1,329.0C299.5,330.6 299.8,333.7 300.2,336.6C300.6,339.5 300.9,343.3 301.3,346.5C301.8,350.6 302.2,354.9 302.7,358.5C303.3,363.3 304.0,366.5 304.6,370.5C306.0,379.2 307.3,387.1 308.7,397.1C309.9,405.6 311.0,417.2 312.2,425.0C313.0,430.1 313.7,434.5 314.5,438.4C316.5,448.4 318.4,449.9 320.4,456.9C322.4,463.9 324.3,474.7 326.3,480.3C328.4,486.2 330.4,490.9 332.5,490.9C334.6,490.9 336.7,480.4 338.8,473.6C340.8,467.2 342.7,458.0 344.7,451.8C346.6,445.7 348.6,446.6 350.5,436.8C351.2,433.4 351.8,429.4 352.5,425.0C353.9,415.7 355.3,390.4 356.7,390.4C358.3,390.4 359.8,410.7 361.4,420.0C363.1,430.1 364.8,437.8 366.5,448.5C368.2,459.0 369.8,470.5 371.5,483.7C372.7,492.9 373.8,504.4 375.0,513.5C376.0,521.3 377.0,528.4 378.0,535.0C379.2,542.7 380.3,550.4 381.5,556.0C383.0,563.0 384.4,570.1 385.9,570.1C387.9,570.1 389.8,564.6 391.8,563.2C393.7,561.9 395.7,562.4 397.6,561.2C399.3,560.2 400.9,559.8 402.6,557.0C403.3,555.8 404.1,555.3 404.8,552.0C405.5,549.0 406.1,537.1 406.8,530.3C407.6,521.8 408.5,513.5 409.3,506.8C410.4,498.3 411.4,493.8 412.5,487.0C413.7,479.5 414.8,475.5 416.0,463.8C416.7,456.4 417.5,445.4 418.2,437.0C418.8,430.5 419.3,423.1 419.9,418.6C420.5,414.0 421.0,411.0 421.6,409.7C422.8,406.9 424.1,406.4 425.3,405.5C426.1,404.9 427.0,404.3 427.8,404.3C428.6,404.3 429.5,407.6 430.3,410.2C431.4,413.6 432.5,419.6 433.6,423.6C436.4,433.8 439.2,439.1 442.0,445.4C444.2,450.5 446.5,456.0 448.7,458.8C449.7,460.1 450.7,461.6 451.7,461.6C453.5,461.6 455.3,458.9 457.1,455.4C458.8,452.2 460.4,447.4 462.1,442.0C464.3,434.8 466.6,422.7 468.8,415.2C470.2,410.5 471.6,404.9 473.0,402.7C473.7,401.7 474.3,401.0 475.0,401.0C476.0,401.0 477.0,404.1 478.0,406.0C480.0,409.8 481.9,415.2 483.9,420.3C486.7,427.5 489.5,438.7 492.3,443.7C494.5,447.7 496.8,447.0 499.0,450.4C501.2,453.8 503.5,459.9 505.7,463.8C507.4,466.7 509.0,471.7 510.7,471.7C512.1,471.7 513.5,470.3 514.9,468.8C515.7,467.9 516.6,467.7 517.4,465.5C518.0,464.0 518.5,454.8 519.1,448.7C519.6,443.0 520.2,434.5 520.7,430.3C521.3,425.9 521.8,423.6 522.4,423.6C524.5,423.6 526.7,423.6 528.8,423.6C529.5,423.6 530.1,416.7 530.8,411.9C531.6,406.0 532.5,395.4 533.3,390.1C534.1,384.8 535.0,382.7 535.8,380.0C537.4,374.9 538.9,373.8 540.5,371.5C542.0,369.3 543.6,368.8 545.1,366.4C546.5,364.2 547.9,359.9 549.3,358.0C550.1,356.9 551.0,355.5 551.8,355.5C553.2,355.5 554.6,358.6 556.0,360.5C557.7,362.7 559.3,366.4 561.0,368.0C561.9,368.8 562.7,369.7 563.6,369.7C564.3,369.7 564.9,365.0 565.6,362.2C566.6,357.9 567.6,350.5 568.6,347.1C569.4,344.3 570.3,343.5 571.1,342.1C572.5,339.7 573.9,340.4 575.3,337.1C575.9,335.8 576.4,333.4 577.0,328.7C577.5,324.3 578.1,315.0 578.6,310.3C579.4,303.0 580.3,299.7 581.1,298.9C582.5,297.6 583.9,297.0 585.3,296.9C588.1,296.6 590.9,296.5 593.7,296.5C594.4,296.5 595.0,299.5 595.7,301.9C596.7,305.5 597.7,313.2 598.7,317.0C599.8,321.3 601.0,323.1 602.1,325.3C603.5,328.1 604.9,329.8 606.3,331.2C608.1,333.1 610.0,334.2 611.8,334.2C612.5,334.2 613.1,332.1 613.8,330.4C615.2,326.8 616.6,318.8 618.0,313.6C619.1,309.5 620.2,304.5 621.3,301.9C622.0,300.2 622.8,298.5 623.5,298.5C624.3,298.5 625.1,301.5 625.9,303.6C627.1,306.7 628.2,315.3 629.4,315.3C630.2,315.3 631.1,306.7 631.9,303.6C632.8,300.1 633.8,296.0 634.7,296.0C635.6,296.0 636.4,298.7 637.3,301.0C638.7,304.7 640.0,312.4 641.4,317.0C643.1,322.7 644.8,327.2 646.5,330.4C648.4,334.0 650.4,334.2 652.3,336.2C654.3,338.2 656.2,342.4 658.2,342.4C660.4,342.4 662.7,342.4 664.9,342.4C666.3,342.4 667.7,340.9 669.1,338.7C669.9,337.4 670.8,337.0 671.6,333.7C672.2,331.4 672.7,327.4 673.3,323.7C674.1,318.3 675.0,307.4 675.8,305.2C676.6,303.0 677.5,302.9 678.3,301.9C680.0,300.0 681.6,299.4 683.3,297.7C685.3,295.7 687.2,294.7 689.2,290.2C690.3,287.7 691.4,283.1 692.5,280.9C693.3,279.2 694.2,277.3 695.0,277.3C695.9,277.3 696.7,279.0 697.6,280.1C699.0,281.9 700.3,284.7 701.7,286.8C703.4,289.5 705.1,290.6 706.8,294.3C708.5,297.9 710.1,304.4 711.8,308.6C714.9,316.2 717.9,320.7 721.0,325.3C723.0,328.2 724.9,331.3 726.9,332.9C727.7,333.6 728.6,334.5 729.4,334.5C730.5,334.5 731.6,332.4 732.7,330.4C733.8,328.3 735.0,327.3 736.1,322.0C736.9,318.3 737.7,312.3 738.5,307.0C739.4,301.2 740.2,294.1 741.1,288.5C742.2,281.1 743.4,275.5 744.5,269.0C745.0,266.3 745.4,262.4 745.9,261.0C746.6,259.1 747.2,258.1 747.9,258.1C748.6,258.1 749.4,261.1 750.1,263.5C751.2,267.0 752.2,277.7 753.3,277.7C755.4,277.7 757.6,271.3 759.7,271.3C760.4,271.3 761.2,274.2 761.9,277.5C762.7,281.2 763.6,287.5 764.4,293.5C765.4,300.4 766.3,308.2 767.3,317.0C768.1,324.6 769.0,335.7 769.8,342.0C770.5,347.6 771.3,350.4 772.0,354.0C773.3,360.6 774.7,365.8 776.0,370.2C777.7,375.8 779.4,378.9 781.1,381.9C781.9,383.4 782.8,385.6 783.6,385.6C784.2,385.6 784.7,379.8 785.3,376.0C786.1,370.8 786.8,364.3 787.6,357.0C788.5,348.4 789.4,337.7 790.3,327.0C791.1,317.1 792.0,304.0 792.8,295.3C793.4,289.4 793.9,283.0 794.5,280.2C794.9,278.2 795.3,277.2 795.7,277.2C796.2,277.2 796.8,280.8 797.3,284.0C798.1,288.7 798.8,298.5 799.6,304.0C800.2,308.6 800.9,315.4 801.5,315.4C803.5,315.4 805.4,312.4 807.4,312.4C808.0,312.4 808.7,314.6 809.3,316.0C810.6,319.0 812.0,328.4 813.3,328.4C815.1,328.4 816.9,325.4 818.7,325.4C819.5,325.4 820.2,327.4 821.0,328.5C822.1,330.2 823.3,334.1 824.4,334.2C826.7,334.4 829.0,334.3 831.3,334.5C832.4,334.6 833.4,337.8 834.5,340.0C836.1,343.2 837.7,348.5 839.3,352.0C840.4,354.3 841.4,358.3 842.5,358.3C843.7,358.3 844.8,357.6 846.0,356.2C847.0,355.0 848.0,354.5 849.0,351.0C849.5,349.2 850.1,345.4 850.6,340.3C851.2,334.9 851.7,324.3 852.3,318.7C852.8,313.4 853.4,308.9 853.9,307.0C855.0,303.1 856.2,302.6 857.3,301.1C858.4,299.7 859.5,298.3 860.6,298.3C861.2,298.3 861.7,300.0 862.3,302.0C863.1,304.9 864.0,311.4 864.8,315.4C865.4,318.1 865.9,322.8 866.5,322.9C868.5,323.1 870.4,323.0 872.4,323.2C873.2,323.3 874.1,324.8 874.9,327.1C876.0,330.1 877.1,337.1 878.2,341.0C879.7,346.4 881.3,348.1 882.8,353.0C884.1,357.0 885.3,362.0 886.6,366.9C887.7,371.2 888.8,377.1 889.9,380.3C890.8,382.8 891.6,383.8 892.5,385.3C894.4,388.6 896.4,390.5 898.3,392.8C899.6,394.3 900.9,397.0 902.2,397.0C902.6,397.0 902.9,395.3 903.3,392.0C903.7,388.4 904.1,371.3 904.5,362.0C904.9,353.4 905.2,348.5 905.6,338.0C905.8,332.3 906.0,321.6 906.2,318.7C906.6,312.4 907.1,309.2 907.5,309.2C908.1,309.2 908.6,311.3 909.2,315.4C909.8,319.5 910.3,328.6 910.9,333.8C911.7,341.5 912.6,350.8 913.4,350.8C914.0,350.8 914.5,343.7 915.1,337.0C915.7,330.3 916.2,318.1 916.8,310.4C917.3,303.2 917.9,294.7 918.4,291.9C918.9,289.4 919.3,288.2 919.8,288.2C920.7,288.2 921.7,290.5 922.6,291.9C923.6,293.4 924.5,297.0 925.5,297.0C926.5,297.0 927.5,292.2 928.5,290.3C929.6,288.2 930.7,285.2 931.8,285.2C932.6,285.2 933.5,288.0 934.3,290.3C935.7,294.2 937.1,301.3 938.5,307.0C940.2,313.8 941.8,322.3 943.5,328.0C945.0,333.1 946.5,336.9 948.0,340.3C950.3,345.4 952.5,345.9 954.8,350.7C956.1,353.4 957.3,356.9 958.6,360.0C959.6,362.3 960.5,366.9 961.5,366.9C962.2,366.9 962.9,362.1 963.6,359.0C964.7,354.0 965.9,344.6 967.0,340.3C969.2,332.1 971.3,335.1 973.5,328.0C975.5,321.4 977.6,307.8 979.6,300.3C981.8,292.1 984.1,287.7 986.3,281.9C987.4,279.0 988.5,275.3 989.6,273.5C990.3,272.3 991.1,271.3 991.8,271.3C992.5,271.3 993.1,273.9 993.8,276.9C994.6,280.7 995.5,289.0 996.3,293.6C997.4,299.9 998.6,303.3 999.7,307.0C1000.6,310.0 1001.6,313.7 1002.5,314.5C1004.6,316.4 1006.8,315.5 1008.9,317.4C1009.4,317.9 1010.0,321.5 1010.5,323.8C1011.5,328.0 1012.5,335.6 1013.5,337.7C1015.9,342.6 1018.2,345.0 1020.6,345.0C1022.3,345.0 1023.9,343.7 1025.6,341.0C1026.2,340.0 1026.9,339.7 1027.5,337.0C1027.9,335.5 1028.2,322.6 1028.6,315.0C1029.1,303.9 1029.7,288.4 1030.2,280.0C1030.6,273.7 1031.0,268.6 1031.4,266.8C1031.9,264.4 1032.5,263.2 1033.0,263.2C1034.1,263.2 1035.1,266.6 1036.2,268.5C1038.7,273.0 1041.3,279.2 1043.8,284.0C1045.9,288.0 1048.0,292.2 1050.1,295.2C1052.6,298.8 1055.2,298.2 1057.7,302.8C1059.6,306.3 1061.6,311.6 1063.5,317.0C1065.5,322.5 1067.4,326.8 1069.4,335.4C1070.5,340.2 1071.6,347.8 1072.7,352.2C1073.3,354.7 1074.0,358.5 1074.6,358.5C1075.7,358.5 1076.7,353.2 1077.8,348.8C1079.2,343.0 1080.6,333.6 1082.0,325.4C1083.4,317.4 1084.7,309.3 1086.1,300.3C1087.2,292.9 1088.4,281.6 1089.5,276.8C1090.2,273.7 1091.0,271.3 1091.7,271.3C1092.4,271.3 1093.0,274.3 1093.7,276.8C1094.8,281.0 1095.9,290.0 1097.0,295.2C1099.2,305.8 1101.5,306.5 1103.7,315.3C1104.8,319.8 1106.0,324.8 1107.1,330.4C1108.5,337.3 1109.9,345.8 1111.3,353.6C1113.0,362.9 1114.6,372.5 1116.3,381.9C1117.7,389.8 1119.1,399.7 1120.5,405.3C1121.6,409.7 1122.7,412.0 1123.8,414.5C1125.0,417.3 1126.3,420.7 1127.5,420.7C1128.0,420.7 1128.4,418.4 1128.9,413.7C1129.3,409.4 1129.8,398.2 1130.2,390.3C1130.6,383.0 1131.0,374.4 1131.4,368.0C1131.9,359.5 1132.5,353.1 1133.0,347.8C1133.9,339.2 1134.7,337.5 1135.6,333.8C1137.0,328.0 1138.3,326.4 1139.7,323.7C1141.7,319.8 1143.6,321.2 1145.6,316.2C1146.4,314.1 1147.3,308.6 1148.1,303.6C1148.8,299.2 1149.6,291.5 1150.3,288.5C1150.7,286.7 1151.2,285.2 1151.6,285.2C1152.4,285.2 1153.2,289.2 1154.0,291.9C1155.1,295.7 1156.2,305.0 1157.3,306.1C1159.3,308.0 1161.2,307.1 1163.2,309.0C1163.8,309.6 1164.3,310.6 1164.9,313.7C1165.7,318.2 1166.6,331.4 1167.4,337.1C1168.2,342.8 1169.1,345.6 1169.9,347.8C1171.9,353.1 1173.8,350.4 1175.8,355.7C1176.5,357.7 1177.3,361.6 1178.0,365.0C1178.8,368.7 1179.6,377.2 1180.4,377.2C1181.4,377.2 1182.3,377.1 1183.3,376.9C1184.4,376.7 1185.5,376.0 1186.6,374.3C1186.9,373.8 1187.3,370.4 1187.6,367.0C1188.0,362.9 1188.4,356.0 1188.8,350.5C1189.4,342.7 1189.9,332.8 1190.5,327.1C1191.2,320.4 1191.8,315.7 1192.5,315.7C1193.2,315.7 1193.8,319.3 1194.5,325.4C1195.1,330.6 1195.6,340.4 1196.2,347.2C1196.6,352.4 1197.1,357.8 1197.5,362.0C1197.8,364.9 1198.1,369.8 1198.4,369.8C1199.2,369.8 1200.1,365.8 1200.9,363.5C1202.1,360.1 1203.4,352.1 1204.6,352.1C1205.3,352.1 1206.0,356.6 1206.7,359.5C1207.5,363.0 1208.4,369.0 1209.2,372.0C1210.1,375.1 1210.9,376.2 1211.8,377.7C1213.5,380.7 1215.1,379.4 1216.8,382.7C1217.6,384.4 1218.5,387.6 1219.3,390.3C1220.3,393.6 1221.3,401.1 1222.3,401.1C1224.4,401.1 1226.4,400.6 1228.5,400.6C1229.6,400.6 1230.8,406.0 1231.9,408.7C1233.3,412.0 1234.7,415.8 1236.1,418.7C1237.5,421.5 1238.8,425.9 1240.2,425.9C1240.8,425.9 1241.3,424.1 1241.9,420.4C1242.5,416.7 1243.0,408.7 1243.6,403.7C1244.2,398.7 1244.7,393.9 1245.3,390.3C1246.1,385.0 1247.0,382.9 1247.8,380.2C1249.2,375.6 1250.6,373.1 1252.0,371.8C1254.1,369.9 1256.1,370.9 1258.2,369.0C1259.2,368.1 1260.2,364.8 1261.2,361.8C1262.0,359.5 1262.7,355.6 1263.5,354.0C1264.0,353.0 1264.4,352.1 1264.9,352.1C1266.5,352.1 1268.0,355.7 1269.6,355.7C1270.7,355.7 1271.8,351.4 1272.9,349.7C1273.7,348.4 1274.6,346.2 1275.4,346.2C1276.1,346.2 1276.8,348.6 1277.5,351.0C1278.5,354.6 1279.6,363.1 1280.6,367.0C1281.4,370.0 1282.2,371.5 1283.0,373.5C1284.7,377.6 1286.3,379.5 1288.0,383.6C1289.1,386.3 1290.2,390.3 1291.3,392.8C1292.0,394.5 1292.8,397.0 1293.5,397.0C1294.5,397.0 1295.4,394.4 1296.4,391.9C1297.5,389.0 1298.6,388.0 1299.7,380.2C1300.1,377.1 1300.6,374.1 1301.0,368.0C1301.4,361.9 1301.9,350.5 1302.3,343.8C1302.8,335.6 1303.4,327.9 1303.9,325.4C1304.6,322.3 1305.2,320.7 1305.9,320.7C1306.9,320.7 1307.9,324.0 1308.9,325.4C1309.7,326.6 1310.6,328.7 1311.4,328.7C1312.5,328.7 1313.7,326.1 1314.8,323.9C1315.9,321.6 1317.1,319.3 1318.2,315.2C1319.6,310.1 1321.0,300.0 1322.4,294.5C1323.7,289.5 1324.9,285.5 1326.2,283.0C1327.3,280.7 1328.5,279.3 1329.6,279.3C1331.6,279.3 1333.6,281.6 1335.6,285.5C1336.8,287.9 1338.1,292.1 1339.3,294.7C1340.0,296.3 1340.8,298.9 1341.5,298.9C1342.4,298.9 1343.4,296.8 1344.3,295.5C1345.3,294.1 1346.2,290.9 1347.2,290.8C1349.4,290.6 1351.7,290.5 1353.9,290.5C1354.4,290.5 1355.0,293.2 1355.5,294.7C1356.5,297.6 1357.6,304.7 1358.6,304.7C1359.4,304.7 1360.3,301.8 1361.1,298.9C1362.2,295.0 1363.3,286.9 1364.4,282.1C1366.6,272.3 1368.9,273.6 1371.1,262.0C1371.9,257.7 1372.8,251.0 1373.6,246.9C1374.4,242.8 1375.3,239.1 1376.1,237.5C1378.3,233.2 1380.6,235.4 1382.8,231.1C1383.7,229.4 1384.5,225.2 1385.4,222.4C1386.5,218.9 1387.6,215.0 1388.7,212.4C1389.8,209.7 1391.0,207.8 1392.1,206.5C1393.1,205.4 1394.1,204.8 1395.1,204.8C1396.9,204.8 1398.6,206.1 1400.4,207.0C1402.4,208.0 1404.3,208.1 1406.3,210.3C1407.7,211.9 1409.1,214.5 1410.5,218.2C1411.3,220.4 1412.2,222.6 1413.0,225.8C1413.8,229.0 1414.7,234.0 1415.5,237.5C1416.3,241.0 1417.2,245.3 1418.0,246.7C1419.1,248.6 1420.3,248.8 1421.4,249.5C1422.5,250.2 1423.6,250.9 1424.7,250.9C1426.7,250.9 1428.6,249.7 1430.6,247.5C1432.0,245.9 1433.4,242.5 1434.8,241.2C1435.5,240.6 1436.1,239.8 1436.8,239.8C1437.8,239.8 1438.8,242.0 1439.8,243.3C1441.8,245.9 1443.7,248.9 1445.7,252.6C1446.8,254.7 1447.9,256.6 1449.0,259.3C1450.4,262.7 1451.8,271.7 1453.2,271.8C1455.4,272.0 1457.7,271.9 1459.9,272.1C1460.7,272.2 1461.6,277.0 1462.4,281.0C1463.2,285.0 1464.1,292.8 1464.9,296.1C1465.7,299.4 1466.6,299.7 1467.4,301.1C1468.8,303.4 1470.2,305.3 1471.6,305.3C1472.2,305.3 1472.9,303.4 1473.5,299.5C1473.9,296.9 1474.4,285.1 1474.8,279.4C1475.4,272.0 1475.9,266.0 1476.5,262.6C1476.8,260.6 1477.2,258.9 1477.5,258.9C1479.7,258.8 1482.0,258.8 1484.2,258.7C1486.0,258.6 1487.7,255.9 1489.5,255.9C1490.2,255.9 1491.0,258.5 1491.7,260.1C1492.8,262.6 1494.0,269.1 1495.1,269.3C1497.3,269.6 1499.6,269.5 1501.8,269.8C1502.6,269.9 1503.5,274.3 1504.3,277.7C1505.3,281.6 1506.2,288.9 1507.2,292.6C1508.2,296.3 1509.1,297.6 1510.1,300.0C1512.1,304.8 1514.0,309.7 1516.0,313.5C1518.0,317.3 1519.9,320.5 1521.9,322.7C1523.0,324.0 1524.1,325.7 1525.2,325.7C1526.0,325.7 1526.9,321.8 1527.7,318.5C1528.6,314.8 1529.6,309.3 1530.5,304.0C1531.2,300.2 1531.8,296.6 1532.5,292.0C1533.4,285.5 1534.4,273.8 1535.3,268.7C1536.0,265.0 1536.6,261.8 1537.3,261.7C1539.1,261.4 1541.0,261.5 1542.8,261.2C1544.5,260.9 1546.1,254.1 1547.8,252.0C1548.9,250.5 1550.1,249.7 1551.2,248.9C1552.4,248.1 1553.7,247.3 1554.9,247.3C1555.4,247.3 1556.0,249.6 1556.5,252.0C1557.2,255.4 1558.0,263.0 1558.7,267.0C1559.5,271.6 1560.4,274.1 1561.2,277.1C1562.8,282.9 1564.4,285.6 1566.0,290.5C1567.1,293.8 1568.1,297.3 1569.2,301.0C1570.5,305.4 1571.7,311.0 1573.0,315.1C1574.9,321.4 1576.9,325.0 1578.8,330.2C1580.7,335.3 1582.6,339.0 1584.5,346.0C1585.6,350.1 1586.7,355.6 1587.8,360.0C1588.7,363.4 1589.5,369.7 1590.4,369.7C1592.1,369.7 1593.8,367.2 1595.5,364.8C1597.3,362.3 1599.0,359.6 1600.8,355.0C1601.7,352.7 1602.6,350.4 1603.5,347.0C1604.7,342.3 1606.0,333.2 1607.2,328.5C1608.6,323.2 1610.0,320.7 1611.4,318.5C1612.5,316.8 1613.6,315.3 1614.7,315.3C1616.1,315.3 1617.4,317.8 1618.8,320.0C1620.5,322.7 1622.3,326.3 1624.0,331.0C1625.3,334.4 1626.5,338.6 1627.8,342.8C1628.9,346.5 1630.1,352.8 1631.2,354.5C1632.3,356.2 1633.4,356.3 1634.5,357.0C1635.6,357.7 1636.8,358.7 1637.9,358.7C1638.6,358.7 1639.4,356.5 1640.1,355.3C1641.0,353.8 1642.0,350.6 1642.9,350.6C1645.4,350.6 1648.0,350.6 1650.5,350.6C1651.2,350.6 1651.8,353.1 1652.5,354.5C1653.5,356.6 1654.5,359.4 1655.5,361.2C1657.5,364.7 1659.4,366.7 1661.4,366.7C1662.2,366.7 1663.1,365.1 1663.9,363.7C1665.3,361.4 1666.7,356.8 1668.1,353.7C1669.2,351.3 1670.3,348.6 1671.4,347.0C1672.2,345.8 1673.1,344.3 1673.9,344.3C1675.0,344.3 1676.2,345.7 1677.3,347.0C1678.4,348.3 1679.5,349.0 1680.6,352.0C1681.4,354.3 1682.3,358.3 1683.1,361.2C1684.0,364.2 1684.8,367.3 1685.7,369.6C1687.4,374.1 1689.0,375.1 1690.7,378.0C1692.1,380.4 1693.5,383.5 1694.9,385.5C1695.8,386.8 1696.8,388.9 1697.7,388.9C1699.8,388.9 1702.0,386.7 1704.1,385.5C1706.1,384.4 1708.0,384.4 1710.0,382.2C1710.8,381.3 1711.7,378.1 1712.5,375.5C1713.6,372.0 1714.7,366.3 1715.8,362.9C1717.5,357.6 1719.2,356.1 1720.9,352.8C1722.8,349.1 1724.8,347.4 1726.7,341.9C1727.8,338.7 1729.0,333.1 1730.1,330.2C1730.9,328.1 1731.8,325.5 1732.6,325.5C1733.4,325.5 1734.3,327.5 1735.1,329.4C1736.5,332.5 1737.9,338.7 1739.3,343.6C1741.0,349.5 1742.6,356.9 1744.3,362.0C1746.3,368.0 1748.2,371.4 1750.2,375.5C1752.2,379.6 1754.1,382.2 1756.1,386.4C1757.2,388.7 1758.3,391.7 1759.4,393.9C1760.4,395.9 1761.4,398.9 1762.4,398.9C1764.5,398.9 1766.5,398.1 1768.6,396.4C1769.4,395.7 1770.3,392.8 1771.1,390.5C1772.5,386.6 1773.9,381.0 1775.3,375.5C1776.4,371.1 1777.6,363.9 1778.7,361.2C1779.4,359.4 1780.2,358.4 1780.9,358.4C1782.7,358.4 1784.4,361.1 1786.2,362.9C1788.4,365.2 1790.7,367.4 1792.9,371.3C1794.6,374.3 1796.3,377.5 1798.0,382.2C1799.4,386.0 1800.7,392.0 1802.1,395.6C1803.0,397.9 1803.8,400.4 1804.7,401.4C1806.8,403.9 1808.8,405.1 1810.9,405.1C1811.2,405.1 1811.6,399.9 1811.9,395.6C1812.4,389.2 1812.9,375.2 1813.4,368.8C1813.8,363.3 1814.3,358.6 1814.7,357.9C1815.3,357.0 1815.8,356.5 1816.4,356.5C1818.1,356.5 1819.7,360.6 1821.4,362.9C1823.4,365.6 1825.3,371.5 1827.3,371.6C1829.5,371.7 1831.8,371.8 1834.0,371.8C1836.0,371.8 1837.9,369.9 1839.9,366.2C1841.0,364.1 1842.1,359.3 1843.2,355.3C1844.3,351.2 1845.5,345.9 1846.6,341.9C1847.3,339.4 1848.0,337.2 1848.7,334.9" fill="none" stroke="#73bf69" stroke-width="1.35" stroke-linejoin="round"/>
</svg>
<div class="hr" style="top:667px;height:1px;background:#2c2e33;"></div>
<div class="hr" style="top:699px;height:2px;background:#2e2f34;"></div>
<div style="position:absolute;left:17px;top:681px;width:19px;height:5px;border-radius:2.5px;background:#73bf69;"></div>
<svg class="ic" style="left:1404.00px;top:18.15px" width="24.6" height="24.6" viewBox="0 0 24 24"><path fill="#ccccdc" d="M12,2A10,10,0,1,0,22,12,10.01114,10.01114,0,0,0,12,2Zm0,18a8,8,0,1,1,8-8A8.00917,8.00917,0,0,1,12,20ZM12,6a.99974.99974,0,0,0-1,1v4H9a1,1,0,0,0,0,2h3a.99974.99974,0,0,0,1-1V7A.99974.99974,0,0,0,12,6Z"/></svg><svg class="ic" style="left:1599.40px;top:18.65px" width="22.5" height="22.5" viewBox="0 0 24 24"><path fill="#ccccdc" d="M17,9.17a1,1,0,0,0-1.41,0L12,12.71,8.46,9.17a1,1,0,0,0-1.41,0,1,1,0,0,0,0,1.42l4.24,4.24a1,1,0,0,0,1.42,0L17,10.59A1,1,0,0,0,17,9.17Z"/></svg><svg class="ic" style="left:1645.40px;top:18.30px" width="24.6" height="24.6" viewBox="0 0 24 24"><path fill="#ccccdc" d="M21.71,20.29,18,16.61A9,9,0,1,0,16.61,18l3.68,3.68a1,1,0,0,0,1.42,0A1,1,0,0,0,21.71,20.29ZM11,18a7,7,0,1,1,7-7A7,7,0,0,1,11,18Zm4-8H7a1,1,0,0,0,0,2h8a1,1,0,0,0,0-2Z"/></svg><svg class="ic" style="left:1705.10px;top:18.30px" width="24.6" height="24.6" viewBox="0 0 24 24"><path fill="#ccccdc" d="M19.91,15.51H15.38a1,1,0,0,0,0,2h2.4A8,8,0,0,1,4,12a1,1,0,0,0-2,0,10,10,0,0,0,16.88,7.23V21a1,1,0,0,0,2,0V16.5A1,1,0,0,0,19.91,15.51ZM12,2A10,10,0,0,0,5.12,4.77V3a1,1,0,0,0-2,0V7.5a1,1,0,0,0,1,1h4.5a1,1,0,0,0,0-2H6.22A8,8,0,0,1,20,12a1,1,0,0,0,2,0A10,10,0,0,0,12,2Z"/></svg><svg class="ic" style="left:1836.75px;top:19.05px" width="22.5" height="22.5" viewBox="0 0 24 24"><path fill="#ccccdc" d="M17,9.17a1,1,0,0,0-1.41,0L12,12.71,8.46,9.17a1,1,0,0,0-1.41,0,1,1,0,0,0,0,1.42l4.24,4.24a1,1,0,0,0,1.42,0L17,10.59A1,1,0,0,0,17,9.17Z"/></svg>
<span class="t" style="left:1440.30px;top:21px;font-size:19.19px;letter-spacing:0.944px;color:#ccccdc;-webkit-text-stroke:0.4px #ccccdc;">Previous month</span>
<span class="t" style="left:1741.20px;top:21px;font-size:19.19px;letter-spacing:0.768px;color:#ccccdc;-webkit-text-stroke:0.4px #ccccdc;">Refresh</span>
<span class="t" style="left:6.30px;top:94px;font-size:19.48px;letter-spacing:0.773px;color:#ccccdc;-webkit-text-stroke:0.4px #ccccdc;">Średnia temperatura domu</span>
<div class="gl">
<span class="t" style="left:10.70px;top:164px;font-size:18.02px;letter-spacing:0.100px;color:#ccccdc;-webkit-text-stroke:0.18px #ccccdc;">22.8 °C</span>
<span class="t" style="left:10.40px;top:218px;font-size:18.02px;letter-spacing:0.150px;color:#ccccdc;-webkit-text-stroke:0.18px #ccccdc;">22.6 °C</span>
<span class="t" style="left:10.10px;top:272px;font-size:18.02px;letter-spacing:0.200px;color:#ccccdc;-webkit-text-stroke:0.18px #ccccdc;">22.4 °C</span>
<span class="t" style="left:10.30px;top:326px;font-size:18.02px;letter-spacing:0.167px;color:#ccccdc;-webkit-text-stroke:0.18px #ccccdc;">22.2 °C</span>
<span class="t" style="left:10.10px;top:380px;font-size:18.02px;letter-spacing:0.200px;color:#ccccdc;-webkit-text-stroke:0.18px #ccccdc;">22.0 °C</span>
<span class="t" style="left:14.00px;top:434px;font-size:18.02px;letter-spacing:-0.450px;color:#ccccdc;-webkit-text-stroke:0.18px #ccccdc;">21.8 °C</span>
<span class="t" style="left:13.70px;top:488px;font-size:18.02px;letter-spacing:-0.400px;color:#ccccdc;-webkit-text-stroke:0.18px #ccccdc;">21.6 °C</span>
<span class="t" style="left:13.40px;top:542px;font-size:18.02px;letter-spacing:-0.350px;color:#ccccdc;-webkit-text-stroke:0.18px #ccccdc;">21.4 °C</span>
<span class="t" style="left:14.10px;top:597px;font-size:18.02px;letter-spacing:-0.466px;color:#ccccdc;-webkit-text-stroke:0.18px #ccccdc;">21.2 °C</span>
<span class="t" style="left:57.80px;top:618px;font-size:18.02px;letter-spacing:-0.724px;color:#ccccdc;-webkit-text-stroke:0.18px #ccccdc;">10/01</span>
<span class="t" style="left:227.00px;top:618px;font-size:18.02px;letter-spacing:-0.074px;color:#ccccdc;-webkit-text-stroke:0.18px #ccccdc;">10/04</span>
<span class="t" style="left:399.00px;top:618px;font-size:18.02px;letter-spacing:-0.349px;color:#ccccdc;-webkit-text-stroke:0.18px #ccccdc;">10/07</span>
<span class="t" style="left:571.00px;top:618px;font-size:18.02px;letter-spacing:-0.899px;color:#ccccdc;-webkit-text-stroke:0.18px #ccccdc;">10/10</span>
<span class="t" style="left:742.60px;top:618px;font-size:18.02px;letter-spacing:-1.024px;color:#ccccdc;-webkit-text-stroke:0.18px #ccccdc;">10/13</span>
<span class="t" style="left:913.10px;top:618px;font-size:18.02px;letter-spacing:-0.899px;color:#ccccdc;-webkit-text-stroke:0.18px #ccccdc;">10/16</span>
<span class="t" style="left:1083.30px;top:618px;font-size:18.02px;letter-spacing:-0.974px;color:#ccccdc;-webkit-text-stroke:0.18px #ccccdc;">10/19</span>
<span class="t" style="left:1252.70px;top:618px;font-size:18.02px;letter-spacing:-0.074px;color:#ccccdc;-webkit-text-stroke:0.18px #ccccdc;">10/22</span>
<span class="t" style="left:1423.30px;top:618px;font-size:18.02px;letter-spacing:0.026px;color:#ccccdc;-webkit-text-stroke:0.18px #ccccdc;">10/25</span>
<span class="t" style="left:1597.60px;top:618px;font-size:18.02px;letter-spacing:-0.124px;color:#ccccdc;-webkit-text-stroke:0.18px #ccccdc;">10/28</span>
<span class="t" style="left:1770.10px;top:618px;font-size:18.02px;letter-spacing:-0.799px;color:#ccccdc;-webkit-text-stroke:0.18px #ccccdc;">10/31</span>
<span class="t" style="left:48.10px;top:643px;font-size:16.42px;letter-spacing:0.467px;color:#6e9fff;-webkit-text-stroke:0.3px #6e9fff;">Name</span>
<span class="t" style="left:48.10px;top:676px;font-size:16.72px;letter-spacing:0.584px;color:#ccccdc;-webkit-text-stroke:0.18px #ccccdc;">Temperatura</span>
<span class="t" style="left:1534.10px;top:643px;font-size:16.42px;letter-spacing:1.071px;color:#6e9fff;-webkit-text-stroke:0.3px #6e9fff;">Min</span>
<span class="t" style="left:1616.30px;top:643px;font-size:16.42px;letter-spacing:0.890px;color:#6e9fff;-webkit-text-stroke:0.3px #6e9fff;">Max</span>
<span class="t" style="left:1702.70px;top:643px;font-size:16.42px;letter-spacing:0.942px;color:#6e9fff;-webkit-text-stroke:0.3px #6e9fff;">Mean</span>
<span class="t" style="left:1799.70px;top:643px;font-size:16.42px;letter-spacing:0.802px;color:#6e9fff;-webkit-text-stroke:0.3px #6e9fff;">Last *</span>
<span class="t" style="left:1507.20px;top:676px;font-size:16.72px;letter-spacing:-0.075px;color:#ccccdc;-webkit-text-stroke:0.18px #ccccdc;">21.3 °C</span>
<span class="t" style="left:1591.30px;top:676px;font-size:16.72px;letter-spacing:0.309px;color:#ccccdc;-webkit-text-stroke:0.18px #ccccdc;">22.7 °C</span>
<span class="t" style="left:1692.50px;top:676px;font-size:16.72px;letter-spacing:-0.308px;color:#ccccdc;-webkit-text-stroke:0.18px #ccccdc;">22.1 °C</span>
<span class="t" style="left:1787.00px;top:676px;font-size:16.72px;letter-spacing:0.459px;color:#ccccdc;-webkit-text-stroke:0.18px #ccccdc;">22.2 °C</span>
</div>
</body></html>
